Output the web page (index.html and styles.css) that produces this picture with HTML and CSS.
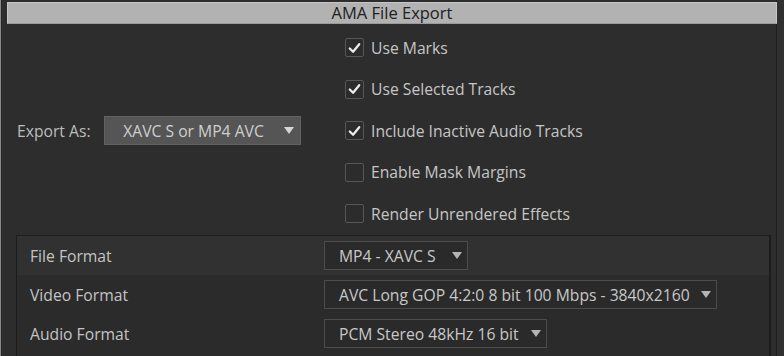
FILE: index.html
```html
<!DOCTYPE html>
<html>
<head>
<meta charset="utf-8">
<link rel="stylesheet" href="styles.css">
</head>
<body>
<div class="window">
  <div class="title">AMA File Export</div>
  <div class="top">
    <div class="export-as">
      <span class="label">Export As:</span>
      <div class="select select-main"><span class="sel-text">XAVC S or MP4 AVC</span><span class="arrow"></span></div>
    </div>
    <div class="checks">
      <div class="check-row"><span class="box checked"><svg viewBox="0 0 18 18" width="18" height="18"><path d="M4 9.5 L7.5 13 L14 5" fill="none" stroke="#ececec" stroke-width="2.4" stroke-linecap="round" stroke-linejoin="round"/></svg></span><span class="check-label">Use Marks</span></div>
      <div class="check-row"><span class="box checked"><svg viewBox="0 0 18 18" width="18" height="18"><path d="M4 9.5 L7.5 13 L14 5" fill="none" stroke="#ececec" stroke-width="2.4" stroke-linecap="round" stroke-linejoin="round"/></svg></span><span class="check-label">Use Selected Tracks</span></div>
      <div class="check-row"><span class="box checked"><svg viewBox="0 0 18 18" width="18" height="18"><path d="M4 9.5 L7.5 13 L14 5" fill="none" stroke="#ececec" stroke-width="2.4" stroke-linecap="round" stroke-linejoin="round"/></svg></span><span class="check-label">Include Inactive Audio Tracks</span></div>
      <div class="check-row"><span class="box"></span><span class="check-label">Enable Mask Margins</span></div>
      <div class="check-row"><span class="box"></span><span class="check-label">Render Unrendered Effects</span></div>
    </div>
  </div>
  <div class="panel">
    <div class="row row-first">
      <span class="row-label">File Format</span>
      <div class="select select-file"><span class="sel-text">MP4 - XAVC S</span><span class="arrow"></span></div>
    </div>
    <div class="row">
      <span class="row-label">Video Format</span>
      <div class="select select-video"><span class="sel-text">AVC Long GOP 4:2:0 8 bit 100 Mbps - 3840x2160</span><span class="arrow"></span></div>
    </div>
    <div class="row">
      <span class="row-label">Audio Format</span>
      <div class="select select-audio"><span class="sel-text">PCM Stereo 48kHz 16 bit</span><span class="arrow"></span></div>
    </div>
  </div>
</div>
</body>
</html>
```
FILE: styles.css
```css
html, body {
  margin: 0;
  padding: 0;
  width: 784px;
  height: 356px;
  overflow: hidden;
  background: #2d2d2d;
  font-family: "Open Sans", "Noto Sans", sans-serif;
}

.window {
  box-sizing: border-box;
  width: 784px;
  height: 356px;
  border-left: 1px solid #8a8a8a;
  box-shadow: inset 1px 0 0 #252525, inset 2px 0 0 #333;
  padding: 2px 0 0 6px;
  background: linear-gradient(to right, #2d2d2d 0, #2d2d2d 775px, #1f1f1f 775px, #1f1f1f 776px, #303030 776px);
}

.title {
  box-sizing: border-box;
  width: 770px;
  height: 22px;
  background: #b2b2b2;
  border: 1px solid #c6c6c6;
  border-bottom-color: #9a9a9a;
  color: #202020;
  font-size: 16.5px;
  line-height: 20px;
  text-align: center;
}

.top {
  display: flex;
  align-items: center;
  padding-top: 2px;
  height: 209px;
  box-sizing: border-box;
  height: 211px;
}

.export-as {
  display: flex;
  align-items: center;
  padding-left: 10px;
  width: 338px;
  box-sizing: border-box;
}

.label {
  color: #bdbdbd;
  font-size: 15.7px;
  width: 87px;
}

.select {
  box-sizing: border-box;
  height: 29px;
  display: flex;
  align-items: center;
  position: relative;
  font-size: 15.7px;
  color: #c8c8c8;
}

.select-main {
  width: 197px;
  background: #555555;
  border: 1px solid #616161;
  justify-content: center;
  padding-right: 18px;
  color: #cfcfcf;
}

.arrow {
  position: absolute;
  right: 6px;
  top: 10px;
  width: 0;
  height: 0;
  border-left: 5px solid transparent;
  border-right: 5px solid transparent;
  border-top: 7px solid #c4c4c4;
}

.select-main .arrow {
  border-top-color: #d6d6d6;
}

.checks {
  display: flex;
  flex-direction: column;
}

.check-row {
  height: 41.5px;
  display: flex;
  align-items: center;
}

.box {
  box-sizing: border-box;
  width: 19px;
  height: 19px;
  border: 1px solid #575757;
  border-radius: 2px;
  background: #2c2c2c;
  margin-right: 7px;
  display: flex;
  align-items: center;
  justify-content: center;
}

.box svg {
  display: block;
}

.check-label {
  color: #c6c6c6;
  font-size: 15.7px;
}

.panel {
  box-sizing: border-box;
  margin-left: 9px;
  width: 755px;
  height: 125px;
  border-top: 1px solid #1c1c1c;
  border-left: 1px solid #1c1c1c;
  border-right: 2px solid #1c1c1c;
  background: #2b2b2b;
}

.row {
  display: flex;
  align-items: center;
  height: 39px;
  padding-left: 13px;
}

.row-first {
  background: #313131;
}

.row-label {
  color: #c4c4c4;
  font-size: 15.7px;
  width: 294px;
}

.select-file,
.select-video,
.select-audio {
  background: #2a2a2a;
  border: 1px solid #4c4c4c;
  padding-left: 14px;
}

.select-file .arrow,
.select-video .arrow,
.select-audio .arrow {
  right: 5px;
  top: 10px;
  border-top-color: #b4b4b4;
}

.select-file { width: 144px; }
.select-video { width: 393px; }
.select-audio { width: 223px; }
```
